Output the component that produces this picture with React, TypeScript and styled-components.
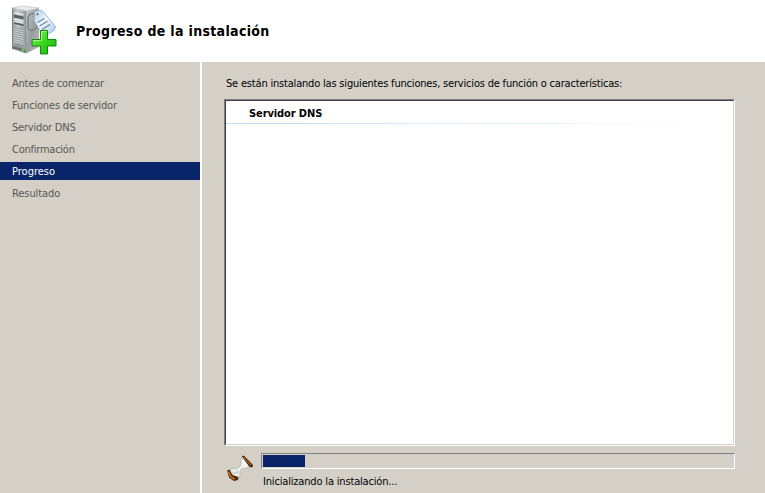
import React from "react";
import styled, { createGlobalStyle } from "styled-components";

const GlobalStyle = createGlobalStyle`
  * { box-sizing: border-box; }
  html, body { margin: 0; padding: 0; background: #d4d0c8; overflow: hidden; }
  body {
    font-family: Tahoma, "DejaVu Sans Condensed", "DejaVu Sans", sans-serif;
    font-stretch: condensed;
    font-size: 11px;
    line-height: 14px;
    color: #000;
  }
`;

const Wizard = styled.div`
  display: flex;
  flex-direction: column;
  width: 765px;
  height: 493px;
  background: #d4d0c8;
`;

const Header = styled.header`
  display: flex;
  flex: 0 0 62px;
  background: #fff;
  padding: 5px 0 0 10px;
`;

const Title = styled.h1`
  margin: 16px 0 0 17px;
  font-size: 14px;
  line-height: 20px;
  font-weight: 700;
  letter-spacing: 0.33px;
  white-space: nowrap;
`;

const Body = styled.div`
  display: flex;
  flex: 1;
  min-height: 0;
`;

const Steps = styled.nav`
  display: flex;
  flex-direction: column;
  gap: 4px;
  flex: 0 0 202px;
  padding-top: 12px;
  border-right: 2px solid #fff;
`;

const Step = styled.div<{ $active?: boolean; $spacing?: number }>`
  height: 18px;
  padding: 1px 0 0 12px;
  line-height: 18px;
  white-space: nowrap;
  letter-spacing: ${(p) => p.$spacing ?? 0}px;
  color: ${(p) => (p.$active ? "#fff" : "#59564f")};
  background: ${(p) => (p.$active ? "#0a246a" : "transparent")};
`;

const Content = styled.main`
  display: flex;
  flex-direction: column;
  flex: 1;
  padding: 15px 30px 0 22px;
`;

const Caption = styled.p<{ $spacing?: number }>`
  margin: 0 0 0 2px;
  white-space: nowrap;
  letter-spacing: ${(p) => p.$spacing ?? 0}px;
`;

const ListBox = styled.section`
  height: 347px;
  margin-top: 8px;
  border: 1px solid;
  border-color: #808080 #fff #fff #808080;
`;

const ListInner = styled.div`
  height: 100%;
  border: 1px solid;
  border-color: #404040 #d4d0c8 #d4d0c8 #404040;
  background: #fff;
`;

const Role = styled.div`
  height: 22px;
  padding: 6px 0 0 23px;
  font-weight: 700;
  white-space: nowrap;
  letter-spacing: -0.1px;
`;

const Rule = styled.div`
  height: 1px;
  background: linear-gradient(to right, #c3d9f5, #dce9fc 40%, #fff 95%);
`;

const StatusRow = styled.div`
  display: flex;
  margin-top: 7px;
`;

const Hourglass = styled.svg`
  flex: 0 0 28px;
  width: 28px;
  height: 28px;
  margin: 1px 7px 0 2px;
`;

const Status = styled.div`
  flex: 1;
`;

const Track = styled.div`
  height: 16px;
  margin-bottom: 6px;
  padding: 1px;
  border: 1px solid;
  border-color: #808080 #fff #fff #808080;
`;

const Fill = styled.div`
  width: 42px;
  height: 12px;
  background: #0a246a;
`;

const ServerIcon = () => (
  <svg width="49" height="51" viewBox="10 5 49 51" aria-hidden="true">
    <defs>
      <linearGradient id="side" x1="0" x2="1" y1="0" y2="1">
        <stop offset="0" stopColor="#c6c9ca" />
        <stop offset=".5" stopColor="#999d9f" />
        <stop offset="1" stopColor="#b9bcbe" />
      </linearGradient>
      <linearGradient id="front" x1="0" x2="1">
        <stop offset="0" stopColor="#94999c" />
        <stop offset=".4" stopColor="#c7cacc" />
        <stop offset="1" stopColor="#979c9f" />
      </linearGradient>
      <linearGradient id="plus" x1="0" x2="1" y1="0" y2="1">
        <stop offset="0" stopColor="#8ff06b" />
        <stop offset=".45" stopColor="#3edb24" />
        <stop offset="1" stopColor="#18ad0b" />
      </linearGradient>
      <linearGradient id="tag" x1="0" x2="1" y1="0" y2="1">
        <stop offset="0" stopColor="#a7c8df" />
        <stop offset=".45" stopColor="#f4faff" />
        <stop offset="1" stopColor="#9fc3df" />
      </linearGradient>
    </defs>
    <path d="M12 8 22 6 39 8 26 11Z" fill="#e8eaeb" stroke="#b7babb" strokeWidth=".6" />
    <path d="M26 11 39 8.5V47L26 53.5Z" fill="url(#side)" />
    <path d="M12 8 26 11V53.5L12 49Z" fill="url(#front)" />
    <path d="M12.5 8.5V49" stroke="#73797d" strokeWidth=".8" />
    <path d="M25.5 11V53" stroke="#8c9194" strokeWidth="1" />
    <path d="m14 14.5 9.5 2v3l-9.5-2ZM14 21l9.5 2v3L14 24Z" fill="#596066" />
    <path d="m14 12.8 9.5 2M14 19l9.5 2M14 21.3l9.5 2" stroke="#e5e7e8" strokeWidth="1.4" />
    <path d="m14 27 9.5 2v21L14 47.5Z" fill="#959a9d" />
    <path d="m14 28.7 9.5 2m-9.5.2 9.5 2m-9.5.2 9.5 2m-9.5.2 9.5 2m-9.5.2 9.5 2m-9.5.2 9.5 2m-9.5.2 9.5 2" stroke="#d2d5d6" strokeWidth="1" />
    <path d="m13 46 12 3.4v3L13 48.6Z" fill="#686e71" />
    <path d="m21.5 49 2.2.6v2.2l-2.2-.6Z" fill="#52f020" />
    <path d="M37 15c-5-3-9-1-9 4v9c0 4 8 3 9-2V16" fill="none" stroke="#73777a" strokeWidth="1.2" />
    <path d="M34.5 11.5 38 10 43 11.5 55.5 26.5 54.5 30 45 36 42 33.5 34 21Z" fill="url(#tag)" stroke="#85a8c4" strokeWidth=".8" />
    <circle cx="37.5" cy="14.2" r="1.6" fill="#56616d" stroke="#fff" strokeWidth=".8" />
    <path d="m37.5 22.5 7-4M39.5 26l8-4.8M42 29.5l8-5" stroke="#6685ad" strokeWidth="1.3" />
    <path d="M40.5 30.5h7v9H56V46h-8.5v8h-7v-8H32v-6.5h8.5Z" fill="url(#plus)" stroke="#148a0d" strokeWidth="1" />
    <path d="M41.5 40.5v-9h5M33 40.5h8.5" fill="none" stroke="#b3ff98" strokeWidth=".8" />
  </svg>
);

const steps = [
  { name: "Antes de comenzar", spacing: -0.22 },
  { name: "Funciones de servidor", spacing: -0.17 },
  { name: "Servidor DNS", spacing: -0.2 },
  { name: "Confirmación", spacing: -0.24 },
  { name: "Progreso", spacing: 0, active: true },
  { name: "Resultado", spacing: -0.08 },
];

export default function App() {
  return (
    <>
      <GlobalStyle />
      <Wizard>
        <Header>
          <ServerIcon />
          <Title>Progreso de la instalación</Title>
        </Header>
        <Body>
          <Steps>
            {steps.map((s) => (
              <Step key={s.name} $active={s.active} $spacing={s.spacing}>
                {s.name}
              </Step>
            ))}
          </Steps>
          <Content>
            <Caption $spacing={-0.19}>
              Se están instalando las siguientes funciones, servicios de función o características:
            </Caption>
            <ListBox>
              <ListInner>
                <Role>Servidor DNS</Role>
                <Rule />
              </ListInner>
            </ListBox>
            <StatusRow>
              <Hourglass viewBox="226 454 28 28" aria-hidden="true">
                <path d="M242 457 251 466.5 245 468.5 241.5 469 240 471 240 477 236 479 228.5 471 232 468.5 238 468 240 466.5Z" fill="#edf0ee" stroke="#9da4a1" strokeWidth=".6" />
                <path d="M241.7 456 244 455.8 253 465 252.5 467.3 249.5 467Z" fill="#4b2209" />
                <path d="m243.5 457.2 7.5 8.2" stroke="#b9661a" strokeWidth="1.1" />
                <path d="M227 470.3 230 469.7 232 474.5 238.5 477 238 480 234 481 229 477.5Z" fill="#552a0b" />
                <path d="m228.3 471.5 2 4.5 4 3.3" fill="none" stroke="#d18125" strokeWidth="1.3" />
                <path d="M231 471.5 235.5 469.5 239 471.5 238 476.5 233.5 475.5Z" fill="#c7d0c3" />
                <path d="m233 472 3-1M235 475l3-1M242 461l5 5" stroke="#fff" strokeWidth="1.4" />
              </Hourglass>
              <Status>
                <Track>
                  <Fill />
                </Track>
                <Caption $spacing={-0.17}>Inicializando la instalación...</Caption>
              </Status>
            </StatusRow>
          </Content>
        </Body>
      </Wizard>
    </>
  );
}
